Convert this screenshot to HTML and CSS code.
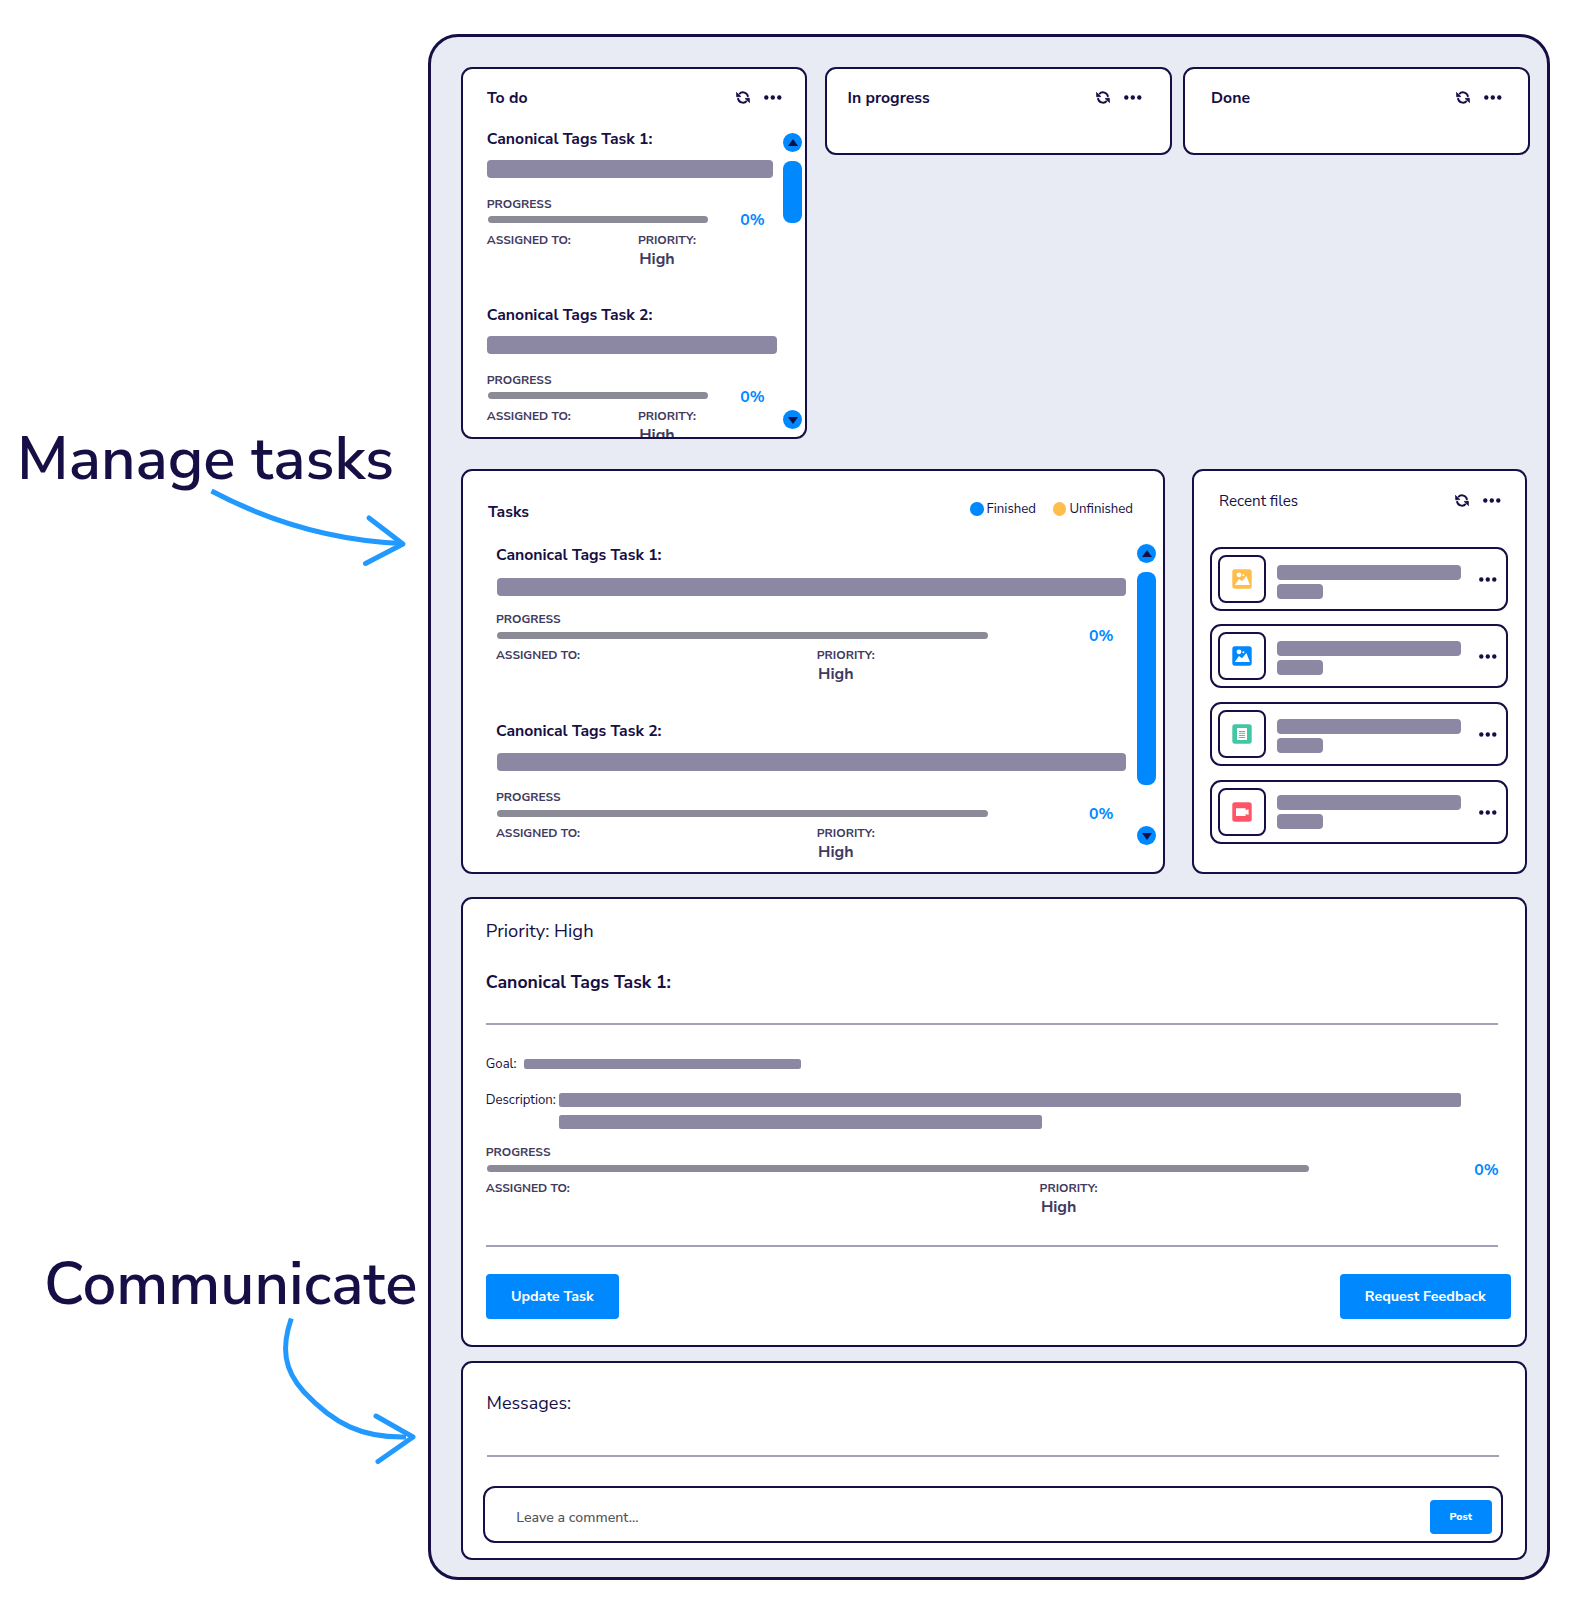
FILE: index.html
```html
<!DOCTYPE html>
<html lang="en">
<head>
<meta charset="utf-8">
<title>Task board</title>
<link rel="stylesheet" href="styles.css">
</head>
<body>
<svg class="sprite" aria-hidden="true">
  <symbol id="refresh" viewBox="0 0 14 13">
    <path d="M3.2 3.1A5 5 0 0 1 12 5.9M10.8 9.9A5 5 0 0 1 2 7.1" fill="none" stroke="currentColor" stroke-width="1.9"/>
    <path d="M0.3 1.3 5 5.6 0.7 5.9ZM13.7 11.7 9 7.4 13.3 7.1Z" fill="currentColor" stroke="currentColor" stroke-width=".6" stroke-linejoin="round"/>
  </symbol>
  <symbol id="dots" viewBox="0 0 18 5">
    <circle cx="2.3" cy="2.5" r="2.2"/><circle cx="8.8" cy="2.5" r="2.2"/><circle cx="15.3" cy="2.5" r="2.2"/>
  </symbol>
  <symbol id="image" viewBox="0 0 20 20">
    <rect x=".3" y=".3" width="19.4" height="19.4" rx="2.6" fill="currentColor"/>
    <circle cx="7" cy="5.8" r="2.4" fill="#fff"/><circle cx="11.4" cy="6.3" r="1" fill="#fff"/>
    <path d="M2.8 15.9 7 9.9l3 2.3 4.4-5.1 3.5 8.8Z" fill="#fff"/>
  </symbol>
  <symbol id="document" viewBox="0 0 20 20">
    <rect x=".3" y=".3" width="19.4" height="19.4" rx="2.6" fill="currentColor"/>
    <path d="M5 4h10v12H5Z" fill="#fff"/>
    <path d="M7 7.5h6M7 9.3h6M7 11.5h6M7 13.5h6" stroke="currentColor" stroke-width="1"/>
  </symbol>
  <symbol id="video" viewBox="0 0 20 20">
    <rect x=".3" y=".3" width="19.4" height="19.4" rx="2.6" fill="currentColor"/>
    <path d="M4 6.2h9.6v2l3-1v5.8l-3-1v2H4Z" fill="#fff"/>
  </symbol>
</svg>

<div class="page">
  <aside class="callouts">
    <div class="callout callout-manage">
      <p>Manage tasks</p>
      <svg class="arrow" width="210" height="90" viewBox="205 485 210 90">
        <path class="shaft" d="M211.5 491Q302 539 402 543.5"/>
        <path class="tip" d="M369 518 403 544 365.5 563.5"/>
      </svg>
    </div>
    <div class="callout callout-communicate">
      <p>Communicate</p>
      <svg class="arrow" width="150" height="160" viewBox="275 1310 150 160">
        <path class="shaft" d="M291.3 1318.5C281 1348 284 1370 304 1392C334 1424 362 1438 406 1437"/>
        <path class="tip" d="M376 1416 413 1437 378 1461.5"/>
      </svg>
    </div>
  </aside>

  <main class="board">
    <div class="kanban">
      <section class="card column column-todo">
        <header class="card-head">
          <h2>To do</h2>
          <div class="actions"><svg class="i-refresh"><use href="#refresh"/></svg><svg class="i-dots"><use href="#dots"/></svg></div>
        </header>
        <div class="card-body">
          <div class="tasks">
            <article class="task">
              <h3>Canonical Tags Task 1:</h3>
              <div class="bar" style="width:286px"></div>
              <div class="label">PROGRESS</div>
              <div class="progress"><i></i><b>0%</b></div>
              <div class="meta"><span>ASSIGNED TO:</span><span>PRIORITY:<b>High</b></span></div>
            </article>
            <article class="task">
              <h3>Canonical Tags Task 2:</h3>
              <div class="bar" style="width:290px"></div>
              <div class="label">PROGRESS</div>
              <div class="progress"><i></i><b>0%</b></div>
              <div class="meta"><span>ASSIGNED TO:</span><span>PRIORITY:<b>High</b></span></div>
            </article>
          </div>
          <div class="scroll">
            <span class="knob"><i class="up"></i></span>
            <span class="thumb"></span>
            <span class="knob"><i class="down"></i></span>
          </div>
        </div>
      </section>
      <section class="card column column-progress">
        <header class="card-head">
          <h2>In progress</h2>
          <div class="actions"><svg class="i-refresh"><use href="#refresh"/></svg><svg class="i-dots"><use href="#dots"/></svg></div>
        </header>
      </section>
      <section class="card column column-done">
        <header class="card-head">
          <h2>Done</h2>
          <div class="actions"><svg class="i-refresh"><use href="#refresh"/></svg><svg class="i-dots"><use href="#dots"/></svg></div>
        </header>
      </section>
    </div>

    <div class="overview">
      <section class="card all-tasks">
        <header class="card-head">
          <h2>Tasks</h2>
          <div class="legend"><span class="finished">Finished</span><span class="unfinished">Unfinished</span></div>
        </header>
        <div class="card-body">
          <div class="tasks">
            <article class="task">
              <h3>Canonical Tags Task 1:</h3>
              <div class="bar"></div>
              <div class="label">PROGRESS</div>
              <div class="progress"><i></i><b>0%</b></div>
              <div class="meta"><span>ASSIGNED TO:</span><span>PRIORITY:<b>High</b></span></div>
            </article>
            <article class="task">
              <h3>Canonical Tags Task 2:</h3>
              <div class="bar"></div>
              <div class="label">PROGRESS</div>
              <div class="progress"><i></i><b>0%</b></div>
              <div class="meta"><span>ASSIGNED TO:</span><span>PRIORITY:<b>High</b></span></div>
            </article>
          </div>
          <div class="scroll">
            <span class="knob"><i class="up"></i></span>
            <span class="thumb"></span>
            <span class="knob"><i class="down"></i></span>
          </div>
        </div>
      </section>

      <section class="card recent">
        <header class="card-head">
          <h2>Recent files</h2>
          <div class="actions"><svg class="i-refresh"><use href="#refresh"/></svg><svg class="i-dots"><use href="#dots"/></svg></div>
        </header>
        <ul class="files">
          <li><span class="thumbnail photo"><svg><use href="#image"/></svg></span><span class="lines"><i></i><i></i></span><svg class="i-dots"><use href="#dots"/></svg></li>
          <li><span class="thumbnail picture"><svg><use href="#image"/></svg></span><span class="lines"><i></i><i></i></span><svg class="i-dots"><use href="#dots"/></svg></li>
          <li><span class="thumbnail doc"><svg><use href="#document"/></svg></span><span class="lines"><i></i><i></i></span><svg class="i-dots"><use href="#dots"/></svg></li>
          <li><span class="thumbnail clip"><svg><use href="#video"/></svg></span><span class="lines"><i></i><i></i></span><svg class="i-dots"><use href="#dots"/></svg></li>
        </ul>
      </section>
    </div>

    <section class="card detail">
      <p class="priority">Priority: High</p>
      <h2>Canonical Tags Task 1:</h2>
      <hr>
      <div class="field goal"><span>Goal:</span><div class="lines"><i></i></div></div>
      <div class="field description"><span>Description:</span><div class="lines"><i></i><i></i></div></div>
      <div class="label">PROGRESS</div>
      <div class="progress"><i></i><b>0%</b></div>
      <div class="meta"><span>ASSIGNED TO:</span><span>PRIORITY:<b>High</b></span></div>
      <hr>
      <div class="buttons"><button>Update Task</button><button>Request Feedback</button></div>
    </section>

    <section class="card messages">
      <h2>Messages:</h2>
      <hr>
      <div class="comment"><span>Leave a comment...</span><button>Post</button></div>
    </section>
  </main>
</div>
</body>
</html>
```
FILE: styles.css
```css
:root {
  --navy: #160f45;
  --blue: #0089ff;
  --muted: #3f3a60;
  --bar: #8c88a4;
  --track: #8b8a97;
}

* { box-sizing: border-box; }

body {
  margin: 0;
  background: #fff;
  color: var(--navy);
  font-family: "Nunito Sans", Nunito, Lato, sans-serif;
}

h2, h3, p, ul { margin: 0; padding: 0; font-weight: 700; }
i { display: block; font-style: normal; }
svg { display: block; }
.sprite { display: none; }

.page { display: flex; width: 1574px; height: 1612px; }

/* Callouts */
.callouts { width: 428px; flex: none; padding-top: 418px; }
.callout p { font-size: 60px; font-weight: 600; line-height: 82px; white-space: nowrap; }
.callout-manage { padding-left: 17px; }
.callout-manage .arrow { margin: -15px 0 0 188px; }
.callout-communicate { margin-top: 668px; padding-left: 44px; }
.callout-communicate .arrow { margin: -15px 0 0 231px; }
.arrow { fill: none; stroke: #2299ff; stroke-width: 5; }
.tip { stroke-linecap: round; stroke-linejoin: round; }

/* Board */
.board {
  flex: none;
  width: 1122px;
  height: 1546px;
  margin-top: 34px;
  padding: 30px 0 0 30px;
  border: 3px solid var(--navy);
  border-radius: 30px;
  background: #e8ebf4;
}

.card {
  border: 2px solid var(--navy);
  border-radius: 11px;
  background: #fff;
  overflow: hidden;
}

.card-head { display: flex; height: 20px; align-items: flex-start; justify-content: space-between; }
.card-head h2 { font-size: 15.8px; line-height: 22px; }
.actions { display: flex; height: 20px; gap: 14px; align-items: center; }
.i-refresh { width: 14px; height: 13px; }
.i-dots { width: 18px; height: 5px; fill: var(--navy); }

/* Kanban */
.kanban { display: flex; align-items: flex-start; height: 372px; }
.column { width: 347px; height: 88px; padding-top: 18px; }
.column .card-head { padding: 0 23px 0 24px; }
.column-todo { display: flex; flex-direction: column; width: 346px; height: 372px; margin-right: 18px; }
.column-progress { margin-right: 11px; }
.column-progress .card-head { padding: 0 28px 0 20.5px; }
.column-done .card-head { padding: 0 26.5px 0 26px; }

.card-body { display: flex; flex: 1; min-height: 0; }

/* Task block */
.task h3 { font-size: 15.77px; line-height: 20px; }
.bar { height: 18px; margin-left: 1px; border-radius: 4px; background: var(--bar); }
.label, .meta { color: var(--muted); font-size: 12px; font-weight: 700; line-height: 14px; }
.progress { display: flex; height: 21px; align-items: center; }
.progress i { height: 7px; margin-left: 1px; border-radius: 3.5px; background: var(--track); }
.progress b { align-self: flex-start; padding-top: 1px; color: var(--blue); font-size: 15.8px; font-weight: 700; line-height: 20px; }
.meta { display: flex; }
.meta b { display: block; margin: 2px 0 0 1.3px; font-size: 16px; font-weight: 700; line-height: 20px; }

.column-todo .tasks { width: 320px; padding: 22px 0 0 23.8px; overflow: hidden; }
.column-todo .bar { margin: 11px 0 0 .4px; }
.column-todo .label { margin-top: 19px; }
.column-todo .progress { margin-top: -2px; }
.column-todo .progress i { width: 220px; margin-right: 32.4px; }
.column-todo .meta { margin-top: 3px; }
.column-todo .meta span:first-child { width: 151.1px; }
.column-todo .task + .task { margin-top: 36px; }
.column-todo .task + .task .progress b { padding-top: 2px; }

/* Scrollbar */
.scroll { display: flex; flex: none; flex-direction: column; width: 19px; }
.knob { display: flex; width: 19px; height: 19px; align-items: center; justify-content: center; border-radius: 50%; background: var(--blue); }
.knob .up { border: 5px solid transparent; border-top: 0; border-bottom: 7px solid var(--navy); }
.knob .down { margin-top: 2px; border: 5px solid transparent; border-bottom: 0; border-top: 7px solid var(--navy); }
.thumb { border-radius: 8px; background: var(--blue); }
.column-todo .scroll { padding: 26px 0 8px; }
.column-todo .thumb { height: 62px; margin: 8.5px 0 auto; }

/* Overview */
.overview { display: flex; gap: 27px; height: 405px; margin-top: 30px; }
.all-tasks { width: 704px; padding-top: 30px; }
.all-tasks .card-head { padding: 0 30px 0 25px; }
.legend { display: flex; gap: 17px; margin-top: -1px; font-size: 13.2px; line-height: 18px; }
.legend span { display: flex; align-items: center; gap: 3px; }
.legend span::before { content: ""; flex: none; width: 13.5px; height: 13.5px; border-radius: 50%; background: var(--blue); }
.legend .unfinished::before { background: #ffbd4c; }

.all-tasks .tasks { width: 641px; margin-left: 33px; padding-top: 24px; }
.all-tasks .bar { width: 629px; margin-top: 13px; }
.all-tasks .label { margin-top: 16px; }
.all-tasks .progress { margin-top: -1px; }
.all-tasks .progress i { width: 491px; margin-right: 101px; }
.all-tasks .meta { margin-top: 2px; }
.all-tasks .meta span:first-child { width: 320.8px; }
.all-tasks .task + .task { margin-top: 37px; }
.all-tasks .task + .task .bar { margin-top: 12px; }
.all-tasks .task + .task .label { margin-top: 19px; }
.all-tasks .scroll { padding-top: 23px; }
.all-tasks .thumb { height: 213px; margin: 9px 0 41px; }

/* Recent files */
.recent { width: 335px; padding-top: 19px; }
.recent .card-head { padding: 0 24px 0 25px; }
.recent .card-head h2 { font-size: 15.2px; font-weight: 400; }
.files { display: flex; flex-direction: column; gap: 14px; margin: 37px 17px 0 16px; list-style: none; }
.files li { display: flex; height: 64px; padding: 6px; border: 2px solid var(--navy); border-radius: 11px; }
.files li:first-child { margin-bottom: -1px; }
.thumbnail { display: flex; width: 48px; height: 48px; align-items: center; justify-content: center; border: 2px solid var(--navy); border-radius: 8px; }
.thumbnail svg { width: 20px; height: 20px; }
.photo { color: #ffbd4c; }
.picture { color: #0089ff; }
.doc { color: #43c6a4; }
.clip { color: #ff5566; }
.lines i { border-radius: 4px; background: var(--bar); }
.files .lines { width: 213px; padding: 9px 0 0 11px; }
.files li:first-child .lines { padding-top: 10px; }
.files li:nth-child(4) .lines { padding-top: 7px; }
.files .lines i { width: 184px; height: 15px; }
.files .lines i + i { width: 46px; margin-top: 4px; }
.files .i-dots { align-self: center; }

/* Detail */
.detail { width: 1066px; height: 450px; margin-top: 23px; padding: 20px 0 0 22.8px; }
hr { height: 2px; margin: 0; border: 0; background: #a4a0b7; }
.priority { font-size: 18.4px; font-weight: 400; line-height: 24px; }
.detail h2 { margin-top: 27px; font-size: 17.65px; line-height: 24px; }
.detail hr { width: 1012px; margin-top: 29px; }
.field { display: flex; font-size: 13.15px; line-height: 18px; }
.field i { border-radius: 2.5px; }
.goal { margin-top: 30px; align-items: center; }
.goal span { width: 38.5px; }
.goal i { width: 277px; height: 10px; margin-bottom: 1px; }
.description { margin-top: 18px; }
.description span { width: 73.7px; }
.description .lines { padding-top: 2px; }
.description i { width: 902px; height: 14px; }
.description i + i { width: 482.5px; margin-top: 8px; }
.detail .label { margin-top: 16px; }
.detail .progress { margin-top: -1px; }
.detail .progress i { width: 822px; margin-right: 165.5px; }
.detail .progress b { padding-top: 2px; }
.detail .meta { margin-top: 2px; }
.detail .meta span:first-child { width: 553.8px; }
.detail .meta + hr { margin-top: 28px; }
.buttons { display: flex; width: 1025px; justify-content: space-between; margin-top: 27px; }
button { padding: 0; border: 0; border-radius: 4px; background: var(--blue); color: #fff; font: 700 14.3px/20px "Nunito Sans", Nunito, Lato, sans-serif; }
.buttons button { width: 133px; height: 44.5px; padding-top: 1px; }
.buttons button + button { width: 171px; }

/* Messages */
.messages { width: 1066px; height: 199px; margin-top: 14px; padding: 28px 0 0 23.5px; }
.messages h2 { font-size: 18px; font-weight: 400; line-height: 24px; }
.messages hr { width: 1012px; margin: 40px 0 0; }
.comment { display: flex; width: 1020px; height: 57px; align-items: center; justify-content: space-between; margin: 29px 0 0 -3.5px; padding: 0 9.5px 0 31.3px; border: 2px solid var(--navy); border-radius: 12px; }
.comment span { margin-top: 6px; color: #555; font-size: 14.2px; font-weight: 500; line-height: 20px; }
.comment button { width: 61.5px; height: 34.5px; margin-top: 5px; padding-bottom: 2px; font-size: 10.6px; font-weight: 800; line-height: 15px; }
```
